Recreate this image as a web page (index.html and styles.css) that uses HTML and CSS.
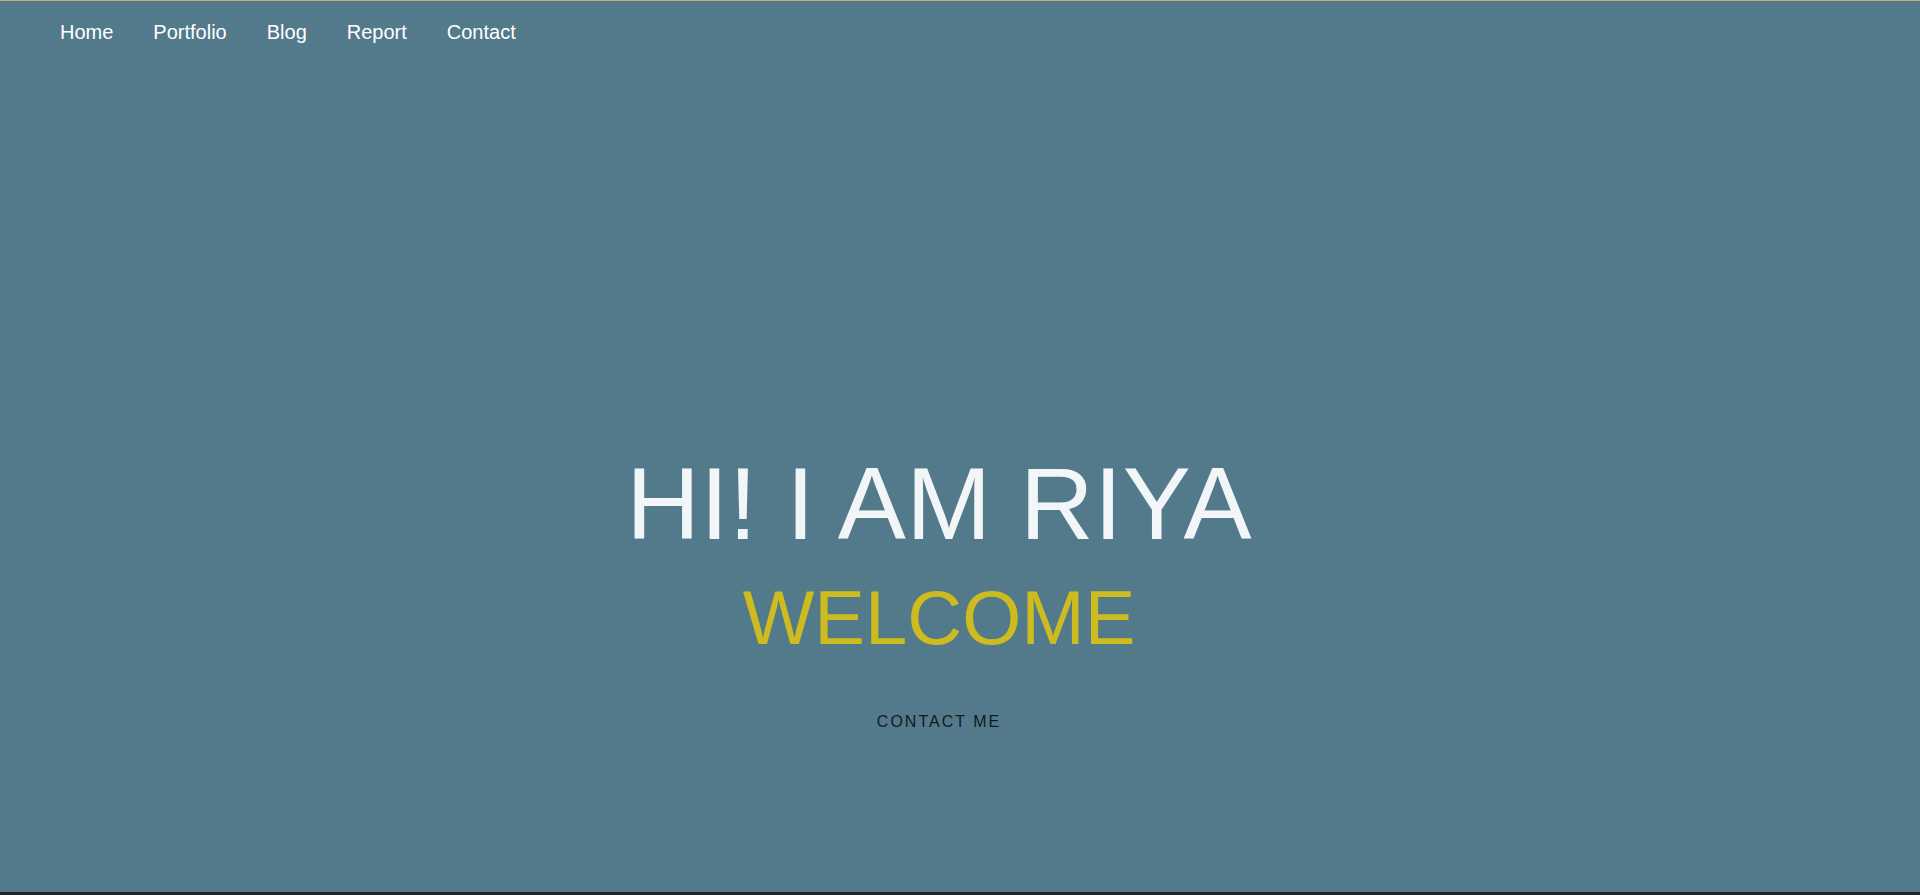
FILE: index.html
```html
<!DOCTYPE html>
<html lang="en">
<head>
<meta charset="utf-8">
<title>Riya</title>
<link rel="stylesheet" href="styles.css">
</head>
<body>
<header class="hero">
  <nav class="nav">
    <a class="nav-link" href="#">Home</a>
    <a class="nav-link" href="#">Portfolio</a>
    <a class="nav-link" href="#">Blog</a>
    <a class="nav-link" href="#">Report</a>
    <a class="nav-link" href="#">Contact</a>
  </nav>
  <div class="intro">
    <h1 class="title">HI! I AM RIYA</h1>
    <h2 class="subtitle">WELCOME</h2>
    <a class="cta" href="#">CONTACT ME</a>
  </div>
</header>
<footer class="footer"></footer>
</body>
</html>
```

FILE: styles.css
```css
html, body {
  margin: 0;
  padding: 0;
}
body {
  font-family: "Liberation Sans", Arial, sans-serif;
  background: #1f252b;
  height: 895px;
  overflow: hidden;
}
.hero {
  box-sizing: border-box;
  height: 892px;
  border-top: 1px solid #c9ab80;
  background: #527a8b;
  display: flex;
  flex-direction: column;
}
.nav {
  display: flex;
  gap: 40px;
  padding: 20px 0 20px 60px;
}
.nav-link {
  color: #ffffff;
  text-decoration: none;
  font-size: 20px;
  line-height: 23px;
}
.intro {
  display: flex;
  flex-direction: column;
  align-items: center;
  padding-top: 383px;
  padding-right: 42px;
}
.title {
  margin: 0;
  font-weight: normal;
  font-size: 102px;
  line-height: 115px;
  letter-spacing: 0.3px;
  color: #f2f6f8;
}
.subtitle {
  margin: 12px 0 0;
  font-weight: normal;
  font-size: 76px;
  line-height: 88px;
  color: #cebb1f;
}
.cta {
  margin-top: 51px;
  color: #14191d;
  text-decoration: none;
  font-size: 16px;
  line-height: 18px;
  letter-spacing: 2px;
}
.footer {
  height: 3px;
  background: #1f252b;
}
```
